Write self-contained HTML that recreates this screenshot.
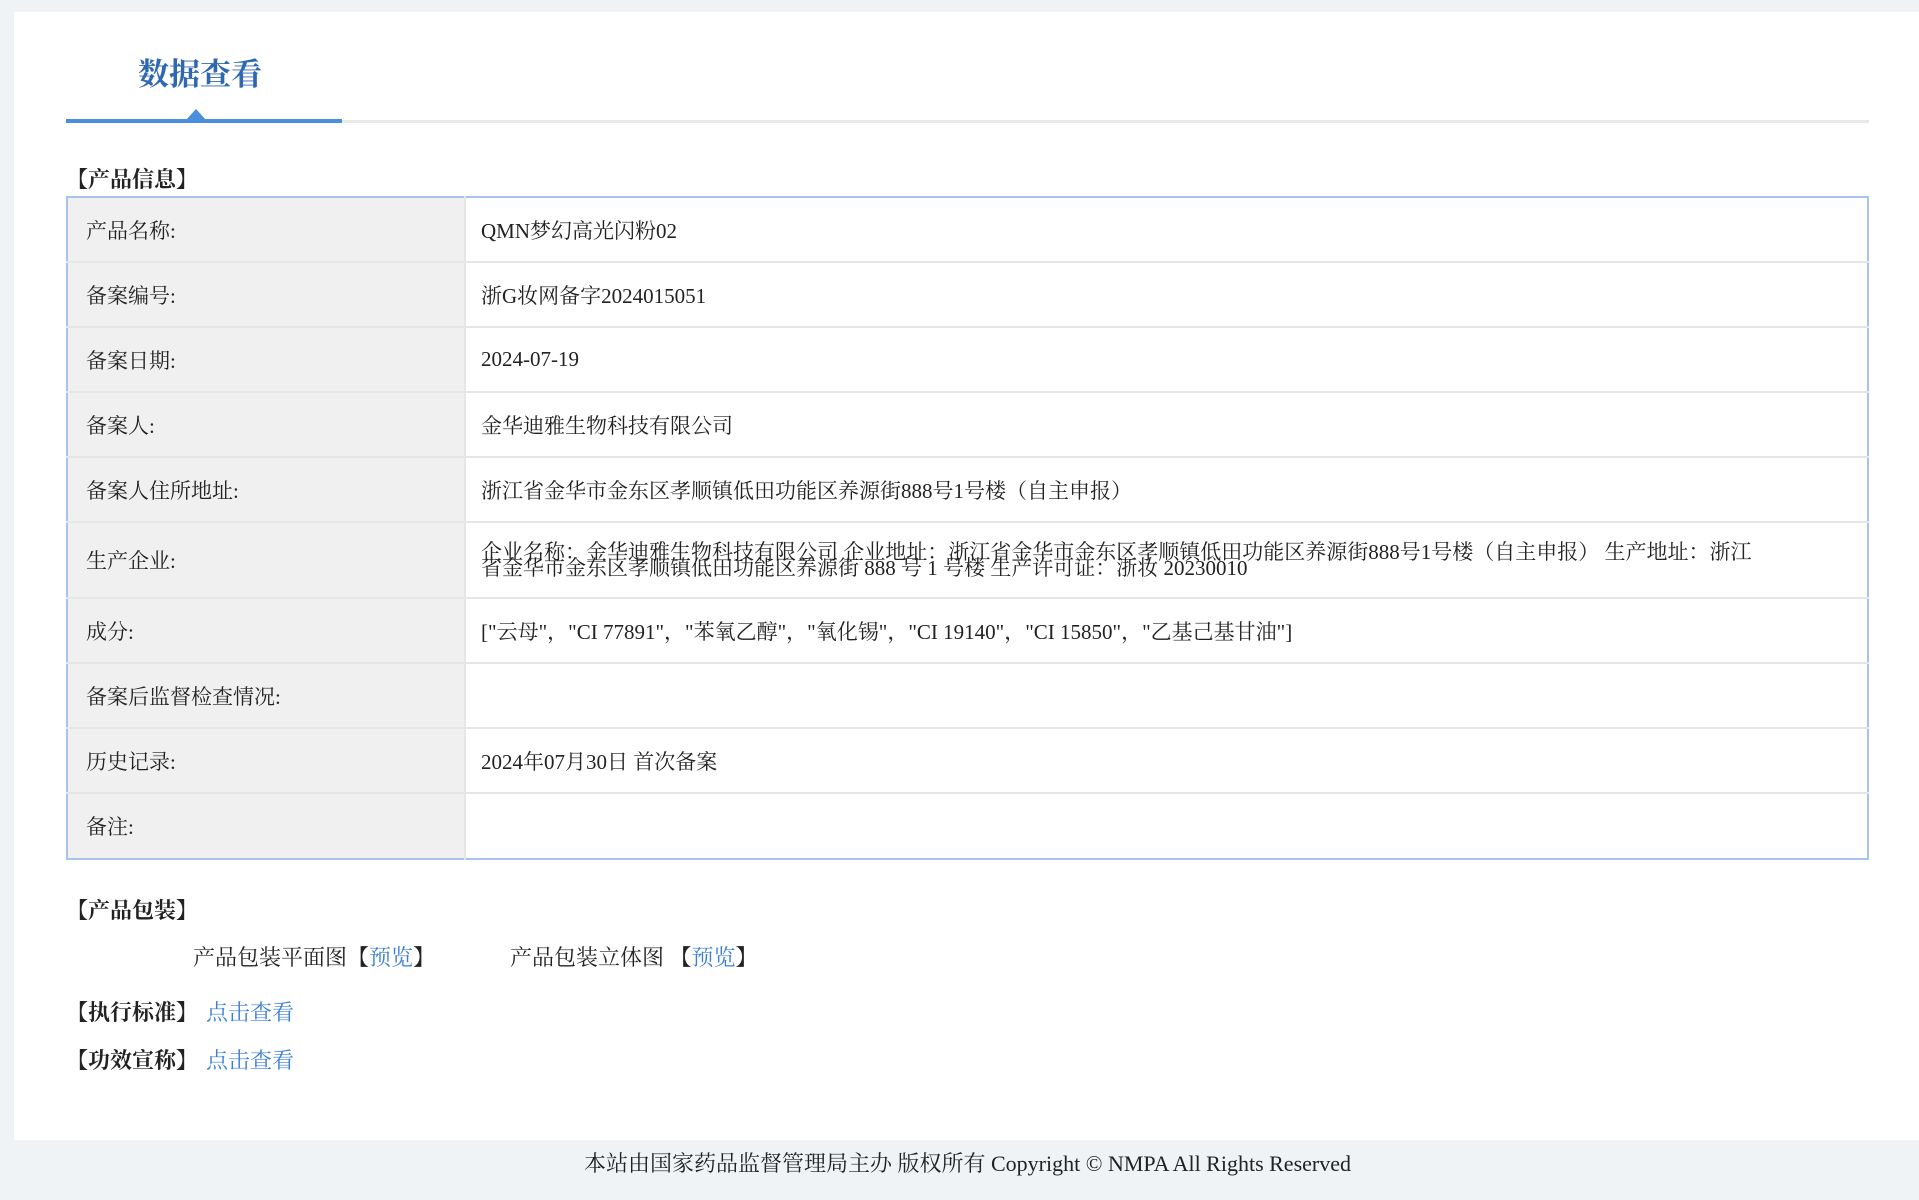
<!DOCTYPE html>
<html><head><meta charset="utf-8"><style>
*{margin:0;padding:0;box-sizing:border-box}
body{width:1919px;height:1200px;background:#eff3f6;font-family:"Liberation Serif","Noto Serif CJK SC",serif;color:#222;position:relative;overflow:hidden}
.panel{position:absolute;left:14px;top:12px;width:1905px;height:1128px;background:#fff}
.abs{position:absolute;white-space:nowrap}
.title{left:138px;top:55px;font-size:31px;color:#2f68b0;line-height:40px;font-weight:bold}
.gline{position:absolute;left:66px;top:120px;width:1803px;height:3px;background:#e6e8eb}
.bline{position:absolute;left:66px;top:119px;width:276px;height:4px;background:#4a8fdd}
.tri{position:absolute;left:186px;top:109px;width:0;height:0;border-left:10px solid transparent;border-right:10px solid transparent;border-bottom:11px solid #4a8fdd}
.h{font-size:22px;font-weight:bold;line-height:26px}
table{position:absolute;left:66px;top:196px;width:1803px;border-collapse:collapse;border:2px solid #a9c4ec;font-size:21px}
td{border-bottom:2px solid #e6e6e6;height:65px;vertical-align:middle}
td.l{width:398px;background:#f0f0f0;padding-left:18px;border-right:2px solid #e6e6e6}
td.v{padding-left:15px}
tr:last-child td{border-bottom:none}
.two{line-height:16px;font-size:21px}
a{color:#3a7fd6;text-decoration:none}
.t{font-size:22px;line-height:26px}
.lk{margin-left:8px}
</style></head><body>
<div class="panel"></div>
<div class="abs title">数据查看</div>
<div class="gline"></div><div class="bline"></div><div class="tri"></div>
<div class="abs h" style="left:66px;top:167px">【产品信息】</div>
<table>
<tr><td class="l">产品名称:</td><td class="v">QMN梦幻高光闪粉02</td></tr>
<tr><td class="l">备案编号:</td><td class="v">浙G妆网备字2024015051</td></tr>
<tr><td class="l">备案日期:</td><td class="v">2024-07-19</td></tr>
<tr><td class="l">备案人:</td><td class="v">金华迪雅生物科技有限公司</td></tr>
<tr><td class="l">备案人住所地址:</td><td class="v">浙江省金华市金东区孝顺镇低田功能区养源街888号1号楼（自主申报）</td></tr>
<tr><td class="l" style="height:76px">生产企业:</td><td class="v two">企业名称：金华迪雅生物科技有限公司 企业地址：浙江省金华市金东区孝顺镇低田功能区养源街888号1号楼（自主申报） 生产地址：浙江<br>省金华市金东区孝顺镇低田功能区养源街 888 号 1 号楼 生产许可证：浙妆 20230010</td></tr>
<tr><td class="l">成分:</td><td class="v">["云母"，"CI 77891"，"苯氧乙醇"，"氧化锡"，"CI 19140"，"CI 15850"，"乙基己基甘油"]</td></tr>
<tr><td class="l">备案后监督检查情况:</td><td class="v"></td></tr>
<tr><td class="l">历史记录:</td><td class="v">2024年07月30日 首次备案</td></tr>
<tr><td class="l" style="height:66px">备注:</td><td class="v"></td></tr>
</table>
<div class="abs h" style="left:66px;top:898px">【产品包装】</div>
<div class="abs t" style="left:193px;top:945px">产品包装平面图【<a>预览</a>】</div>
<div class="abs t" style="left:510px;top:945px">产品包装立体图 【<a>预览</a>】</div>
<div class="abs t" style="left:66px;top:1000px"><b>【执行标准】</b><a class="lk">点击查看</a></div>
<div class="abs t" style="left:66px;top:1048px"><b>【功效宣称】</b><a class="lk">点击查看</a></div>
<div class="abs" style="left:0;width:1919px;top:1151px;text-align:center;font-size:22px;line-height:26px;padding-left:16px">本站由国家药品监督管理局主办 版权所有 Copyright © NMPA All Rights Reserved</div>
</body></html>
